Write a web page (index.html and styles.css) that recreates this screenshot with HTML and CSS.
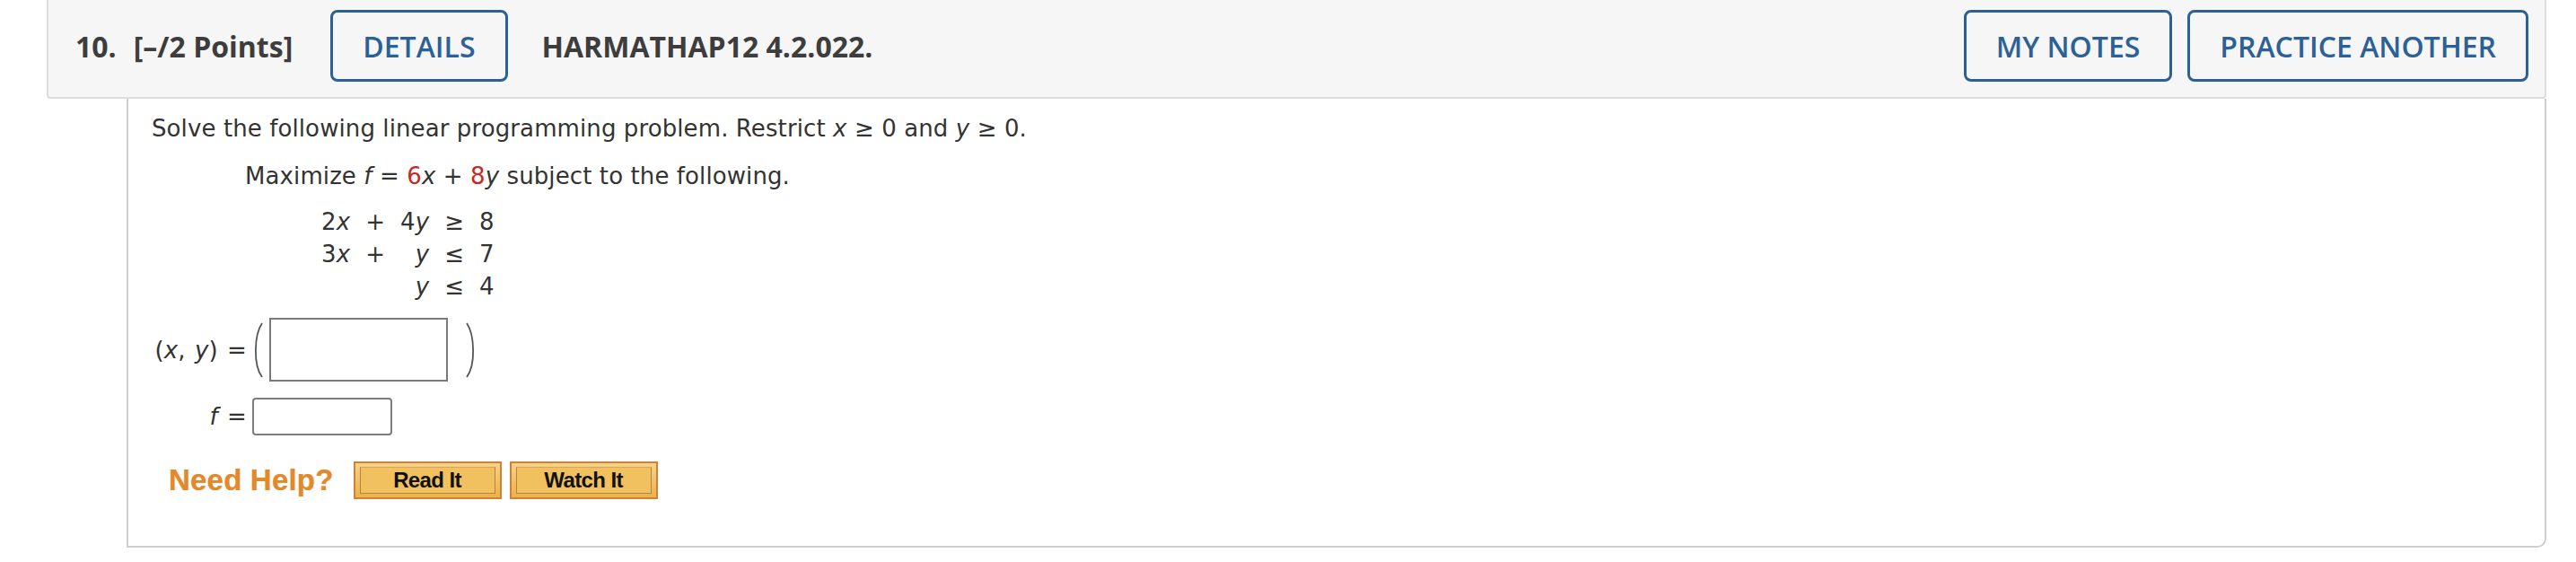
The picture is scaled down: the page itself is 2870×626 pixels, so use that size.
FILE: index.html
```html
<!DOCTYPE html>
<html lang="en">
<head>
<meta charset="utf-8">
<title>Question 10</title>
<link rel="stylesheet" href="styles.css">
</head>
<body>
<div class="question">
  <header class="qhead">
    <span class="qnum">10.</span>
    <span class="qpts">[&ndash;/2 Points]</span>
    <button class="btn btn-details">DETAILS</button>
    <span class="qcode">HARMATHAP12 4.2.022.</span>
    <div class="spacer"></div>
    <button class="btn">MY NOTES</button>
    <button class="btn">PRACTICE ANOTHER</button>
  </header>
  <div class="qbody">
    <p class="intro">Solve the following linear programming problem. Restrict <i>x</i> &ge; 0 and <i>y</i> &ge; 0.</p>
    <p class="objective">Maximize <i>f</i> = <span class="red">6</span><i>x</i> + <span class="red">8</span><i>y</i> subject to the following.</p>
    <div class="constraints">
      <span class="c-r">2<i>x</i></span><span>+</span><span class="c-r">4<i>y</i></span><span>&ge;</span><span>8</span>
      <span class="c-r">3<i>x</i></span><span>+</span><span class="c-r"><i>y</i></span><span>&le;</span><span>7</span>
      <span></span><span></span><span class="c-r"><i>y</i></span><span>&le;</span><span>4</span>
    </div>
    <div class="answers">
      <div class="arow arow-xy">
        <span class="lbl">(<i>x</i>, <i>y</i>) =</span>
        <svg class="paren paren-l" width="14" height="62" viewBox="0 0 14 62"><path d="M12 1 C3 14 2 48 12 61" fill="none" stroke="#555" stroke-width="1.8"/></svg>
        <span class="box box-xy"></span>
        <svg class="paren paren-r" width="14" height="62" viewBox="0 0 14 62"><path d="M2 1 C11 14 12 48 2 61" fill="none" stroke="#555" stroke-width="1.8"/></svg>
      </div>
      <div class="arow arow-f">
        <span class="lbl"><i>f</i> =</span>
        <span class="box box-f"></span>
      </div>
    </div>
    <div class="help">
      <span class="need">Need Help?</span>
      <button class="hbtn"><span class="hbtn-in">Read It</span></button>
      <button class="hbtn"><span class="hbtn-in">Watch It</span></button>
    </div>
  </div>
</div>
</body>
</html>
```

FILE: styles.css
```css
* { box-sizing: border-box; }
html, body { margin: 0; padding: 0; background: #fff; }

.question {
  margin: 0 33px 0 52px;
}

.qhead {
  height: 110px;
  background: #f6f6f6;
  border: 2px solid #dedede;
  border-top: none;
  border-radius: 0 0 4px 4px;
  display: flex;
  align-items: center;
  padding: 11px 18px 17px 30px;
  font-family: "Open Sans", "Liberation Sans", sans-serif;
  font-size: 32px;
  color: #3d3d3d;
}

.qnum, .qpts, .qcode { font-weight: 700; white-space: nowrap; }
.qpts { margin-left: 19px; }
.btn-details { margin-left: 42px; }
.qcode { margin-left: 38px; }
.spacer { flex: 1; }

.btn {
  height: 80px;
  padding: 0 33px;
  border: 3.5px solid #2b6196;
  border-radius: 8px;
  background: transparent;
  color: #2b6196;
  font-family: "Open Sans", "Liberation Sans", sans-serif;
  font-weight: 600;
  font-size: 32px;
  white-space: nowrap;
}
.btn + .btn { margin-left: 17px; }

.qbody {
  margin-left: 89px;
  height: 500px;
  border: 2px solid #cfcfcf;
  border-top: none;
  border-radius: 0 0 10px 0;
  padding: 17px 0 0 26px;
  font-family: Verdana, "DejaVu Sans", sans-serif;
  font-size: 26px;
  letter-spacing: 0.1px;
  color: #333;
}

.qbody p { margin: 0; line-height: 32px; }
.objective { margin-top: 21px !important; margin-left: 104px !important; }
.red { color: #c8281e; }

.constraints {
  margin: 17px 0 0 189px;
  display: grid;
  grid-template-columns: auto auto auto auto auto;
  justify-content: start;
  column-gap: 17px;
  font-size: 26px;
  line-height: 36px;
}
.c-r { text-align: right; }

.answers { margin-top: 17px; }
.arow { display: flex; align-items: center; }
.lbl {
  width: 106px;
  text-align: right;
  white-space: nowrap;
  line-height: 32px;
  word-spacing: 2px;
}
.arow-xy { height: 71px; }
.paren-l { margin-left: 5px; }
.box-xy {
  margin-left: 6px;
  width: 199px;
  height: 71px;
  border: 2px solid #7a7a7a;
  background: #fff;
}
.paren-r { margin-left: 19px; }

.arow-f { margin-top: 18px; }
.box-f {
  margin-left: 6px;
  width: 156px;
  height: 42px;
  border: 2px solid #7d7d7d;
  border-radius: 4px;
  background: #fff;
}

.help {
  margin: 29px 0 0 19px;
  display: flex;
  align-items: center;
  height: 42px;
}
.need {
  font-family: "Liberation Sans", Arial, sans-serif;
  font-weight: 700;
  font-size: 33px;
  letter-spacing: 0.2px;
  color: #e2892c;
  text-shadow: 0 0 1px rgba(226, 137, 44, 0.6);
  margin-right: 22px;
}
.hbtn {
  width: 165px;
  height: 42px;
  padding: 4px 5px;
  border: 2px solid #c9843a;
  background: linear-gradient(#f7d28a, #eeb04a);
  font-family: "Liberation Sans", Arial, sans-serif;
  font-weight: 700;
  font-size: 24px;
  color: #111;
  display: flex;
}
.hbtn + .hbtn { margin-left: 9px; }
.hbtn-in {
  flex: 1;
  display: flex;
  align-items: center;
  justify-content: center;
  border: 1.5px solid #b38442;
  border-top-color: #d9a55a;
  background: #f2c15f;
  letter-spacing: -0.6px;
}
```
